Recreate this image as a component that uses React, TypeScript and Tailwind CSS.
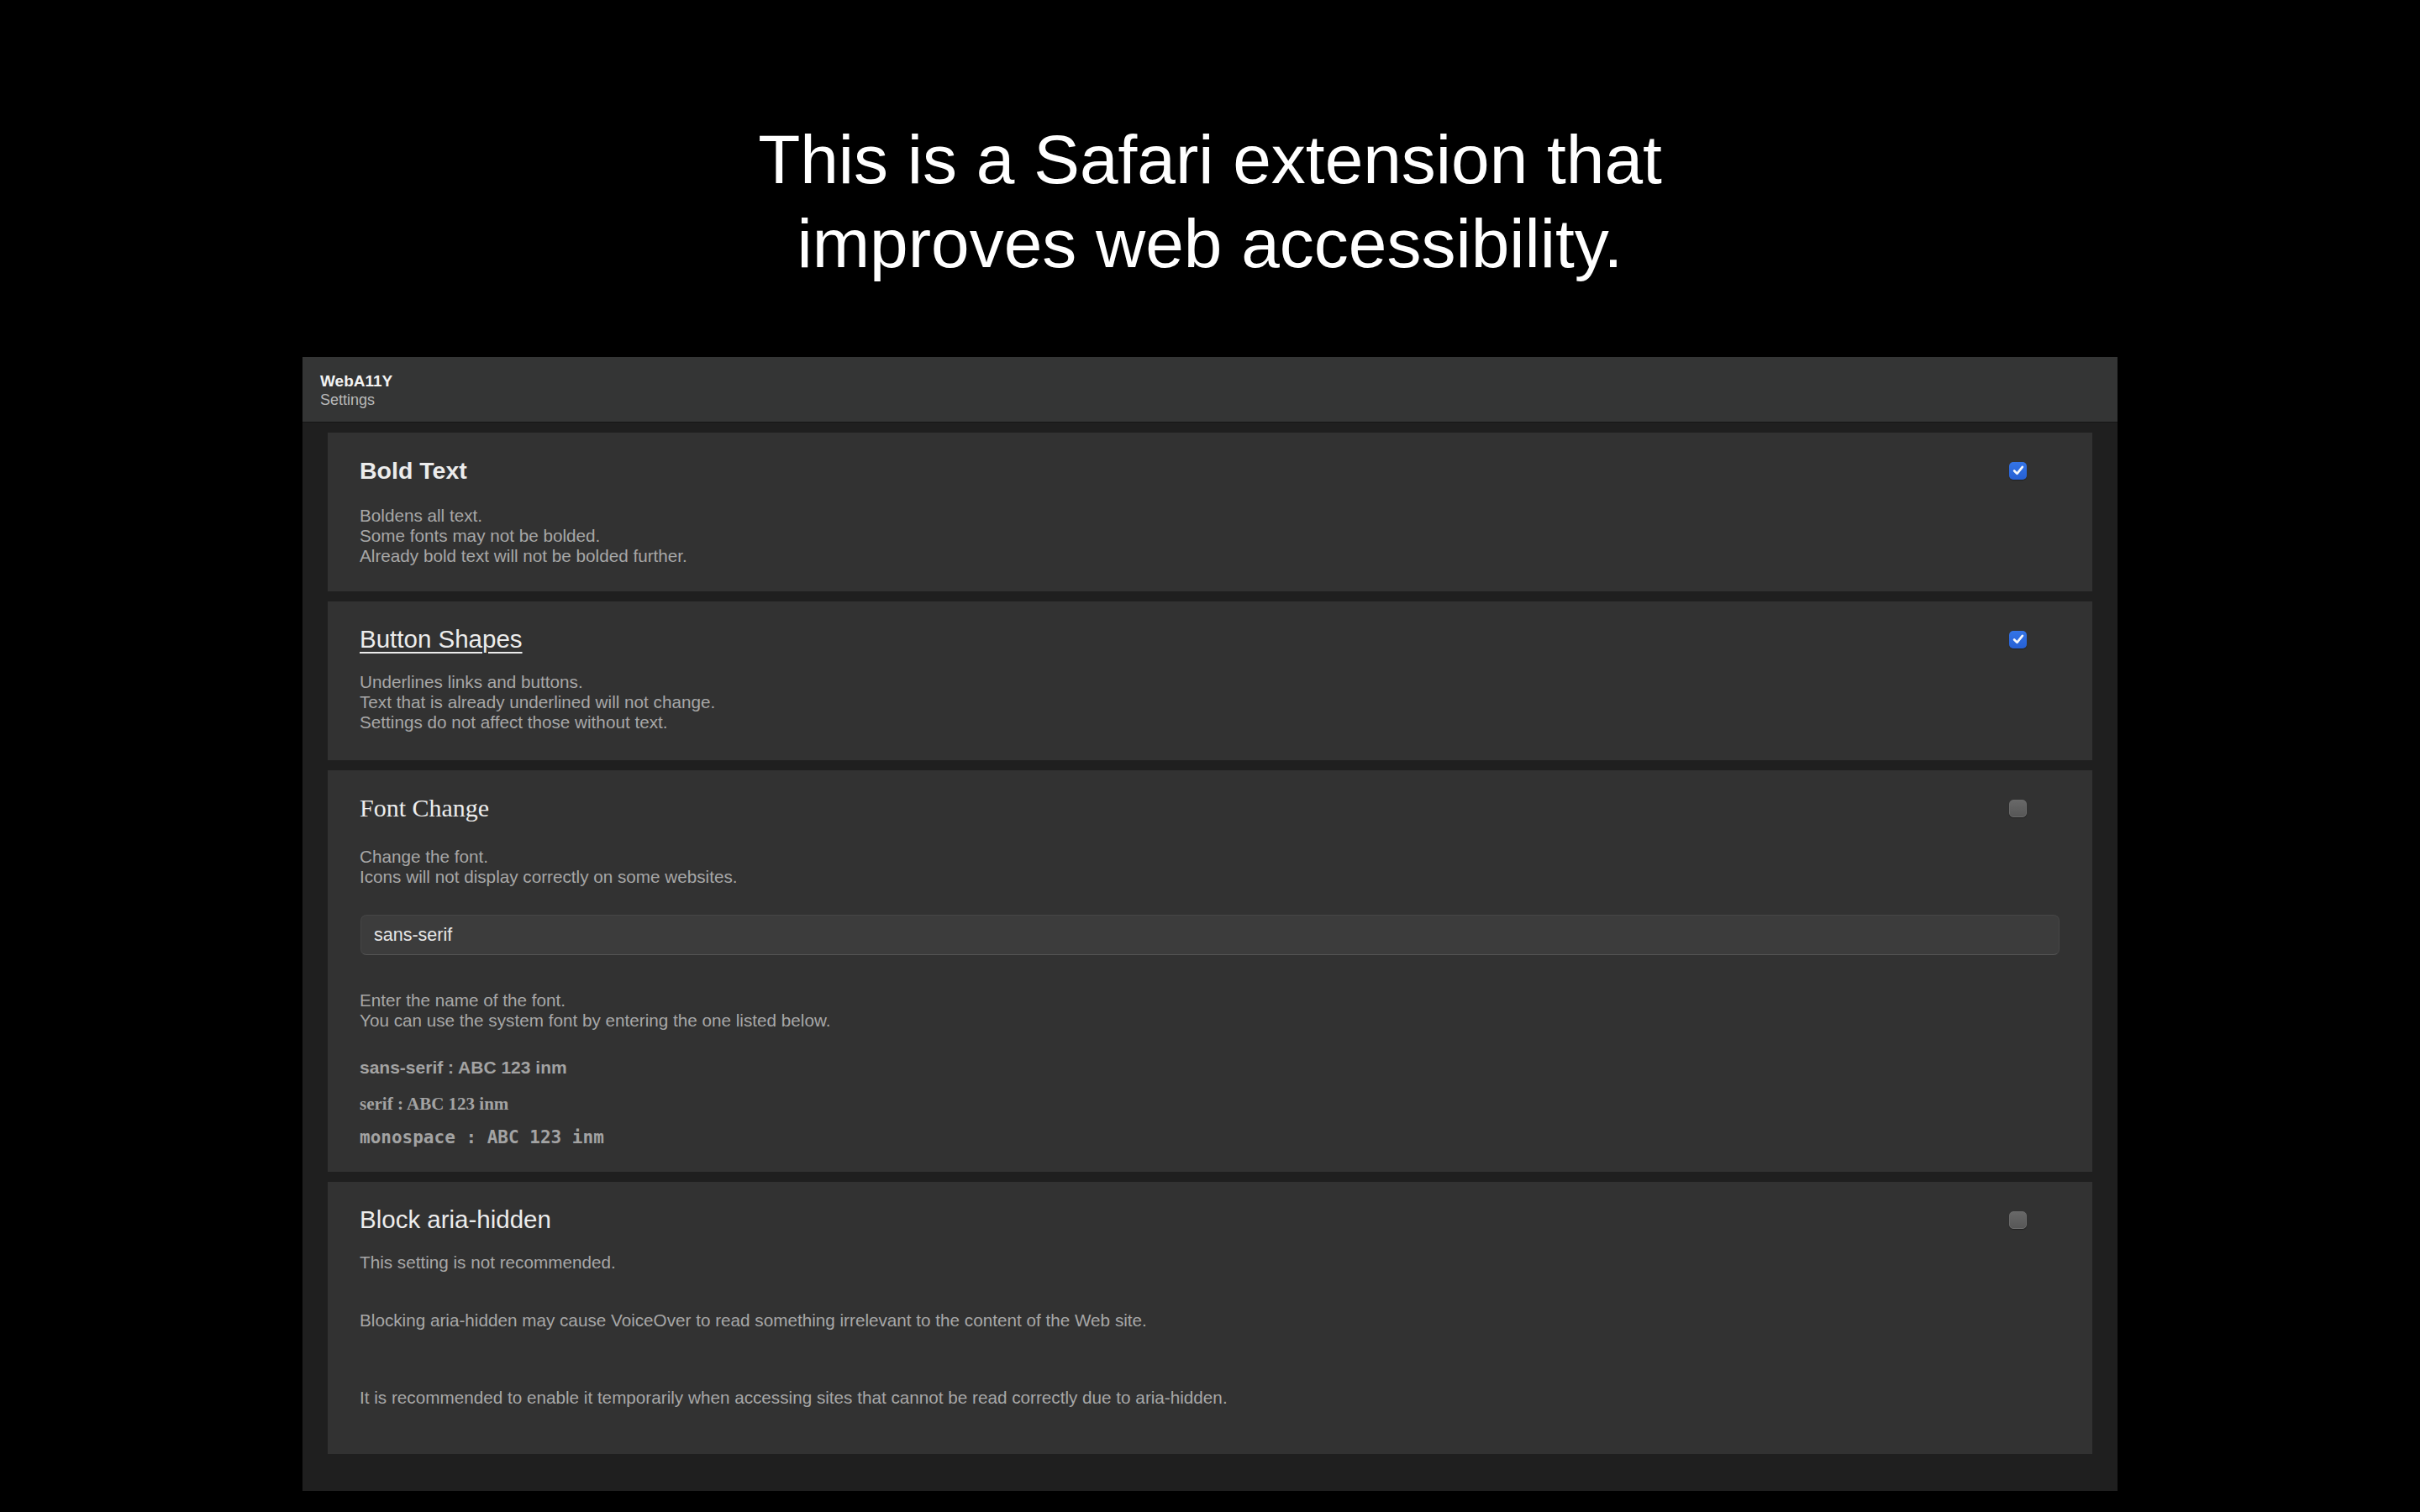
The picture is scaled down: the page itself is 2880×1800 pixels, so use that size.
import { useState } from "react";

function Check({ checked, onToggle }: { checked: boolean; onToggle: () => void }) {
  return (
    <button
      type="button"
      role="checkbox"
      aria-checked={checked}
      onClick={onToggle}
      className={`mr-[40px] flex h-[21px] w-[21px] shrink-0 items-center justify-center rounded-[5px] ${
        checked
          ? "bg-gradient-to-b from-[#3474e6] to-[#2660d4] shadow-[0_1px_1px_rgba(0,0,0,0.35)]"
          : "border border-[#6a6a6a] bg-gradient-to-b from-[#686868] to-[#575757] shadow-[0_1px_1px_rgba(0,0,0,0.35)]"
      }`}
    >
      {checked ? (
        <svg viewBox="0 0 20 20" className="h-[18px] w-[18px]">
          <path
            d="M4.6 10.6 L8.3 14.3 L15.4 5.4"
            fill="none"
            stroke="#f4f7fc"
            strokeWidth="3"
            strokeLinecap="round"
            strokeLinejoin="round"
          />
        </svg>
      ) : null}
    </button>
  );
}

function Card({
  children,
  title,
  checked,
  onToggle,
  pb
}: {
  children: React.ReactNode;
  title: React.ReactNode;
  checked: boolean;
  onToggle: () => void;
  pb: string;
}) {
  return (
    <section className={`bg-[#323232] px-[38px] pt-[28px] ${pb}`}>
      <div className="flex items-center justify-between">
        {title}
        <Check checked={checked} onToggle={onToggle} />
      </div>
      {children}
    </section>
  );
}

const desc = "text-[20.7px] leading-[24px] text-[#a7a7a7]";

export default function App() {
  const [bold, setBold] = useState(true);
  const [shapes, setShapes] = useState(true);
  const [fontChange, setFontChange] = useState(false);
  const [aria, setAria] = useState(false);
  const [fontName, setFontName] = useState("sans-serif");

  return (
    <div className="min-h-screen bg-black pt-[140px] font-['Liberation_Sans',Arial,sans-serif]">
      <h1 className="text-center text-[82px] font-normal leading-[100px] text-white">
        <span className="block">This is a Safari extension that</span>
        <span className="block">improves web accessibility.</span>
      </h1>

      <div className="mx-auto mt-[85px] w-[2160px] bg-[#1f1f1f]">
        <header className="border-b border-[#161616] bg-[#343535] px-[21px] pb-[15px] pt-[18px]">
          <div className="text-[19px] font-bold leading-[22px] text-[#f2f2f2]">WebA11Y</div>
          <div className="text-[18px] leading-[22px] text-[#b9b9b9]">Settings</div>
        </header>

        <div className="flex flex-col gap-[12px] px-[30px] pb-[44px] pt-[12px]">
          <Card
            checked={bold}
            onToggle={() => setBold(!bold)}
            pb="pb-[30px]"
            title={
              <h2 className="text-[28.5px] font-bold leading-[34px] text-[#ececec]">Bold Text</h2>
            }
          >
            <p className={`mt-[25px] ${desc}`}>
              Boldens all text.
              <br />
              Some fonts may not be bolded.
              <br />
              Already bold text will not be bolded further.
            </p>
          </Card>

          <Card
            checked={shapes}
            onToggle={() => setShapes(!shapes)}
            pb="pb-[33px]"
            title={
              <h2 className="text-[29.5px] leading-[34px] text-[#ececec] underline decoration-[2px] underline-offset-[5px]">
                Button Shapes
              </h2>
            }
          >
            <p className={`mt-[22px] ${desc}`}>
              Underlines links and buttons.
              <br />
              Text that is already underlined will not change.
              <br />
              Settings do not affect those without text.
            </p>
          </Card>

          <Card
            checked={fontChange}
            onToggle={() => setFontChange(!fontChange)}
            pb="pb-[28px]"
            title={
              <h2 className="font-['Liberation_Serif','Times_New_Roman',serif] text-[30px] leading-[34px] text-[#ececec]">
                Font Change
              </h2>
            }
          >
            <p className={`mt-[29px] ${desc}`}>
              Change the font.
              <br />
              Icons will not display correctly on some websites.
            </p>
            <input
              value={fontName}
              onChange={(event) => setFontName(event.target.value)}
              className="mx-px mt-[33px] block h-[48px] w-[calc(100%-2px)] rounded-[7px] border border-[#464646] border-b-[#555555] bg-[#3c3c3c] px-[15px] text-[21.5px] text-[#e6e6e6] outline-none"
            />
            <p className={`mt-[42px] ${desc}`}>
              Enter the name of the font.
              <br />
              You can use the system font by entering the one listed below.
            </p>
            <p className="mt-[31px] text-[21px] font-bold leading-[26px] text-[#a3a3a3]">
              sans-serif : ABC 123 inm
            </p>
            <p className="mt-[17px] font-['Liberation_Serif','Times_New_Roman',serif] text-[21px] font-bold leading-[26px] text-[#a3a3a3]">
              serif : ABC 123 inm
            </p>
            <p className="mt-[14px] font-['DejaVu_Sans_Mono',monospace] text-[21px] font-bold leading-[26px] text-[#a3a3a3]">
              monospace : ABC 123 inm
            </p>
          </Card>

          <Card
            checked={aria}
            onToggle={() => setAria(!aria)}
            pb="pb-[55px]"
            title={
              <h2 className="text-[29.5px] leading-[34px] text-[#ececec]">Block aria-hidden</h2>
            }
          >
            <p className={`mt-[22px] ${desc}`}>This setting is not recommended.</p>
            <p className={`mt-[45px] ${desc}`}>
              Blocking aria-hidden may cause VoiceOver to read something irrelevant to the content of
              the Web site.
            </p>
            <p className={`mt-[68px] ${desc}`}>
              It is recommended to enable it temporarily when accessing sites that cannot be read
              correctly due to aria-hidden.
            </p>
          </Card>
        </div>
      </div>
    </div>
  );
}
